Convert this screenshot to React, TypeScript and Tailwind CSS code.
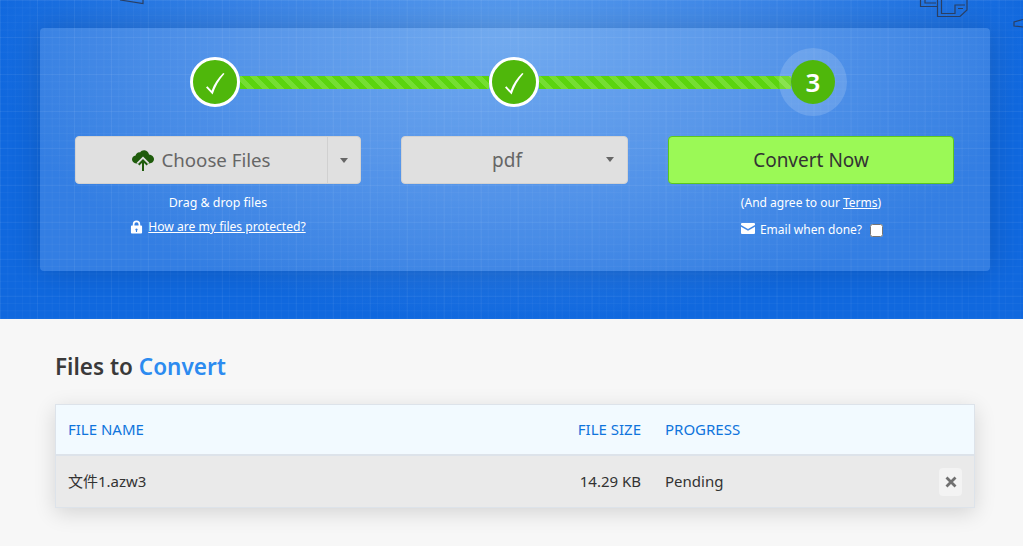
const font = "font-['Noto_Sans','Noto_Sans_CJK_SC',sans-serif]"

function StepDone() {
  return (
    <div className="w-[50px] h-[50px] shrink-0 rounded-full border-[3px] border-white bg-[#4fb70b] relative z-10">
      <svg viewBox="0 0 50 50" className="absolute -left-[3px] -top-[3px] w-[50px] h-[50px]">
        <path d="M16 30.5l1.4-1.3 4.2 4.6C24 27 28 21 33.2 16l1.3.7C29 22.5 25 30 22.6 37.6z" fill="#fff" />
      </svg>
    </div>
  )
}

function StripeBar({ width }: { width: string }) {
  return (
    <div className={`${width} h-[13px] shrink-0 bg-[repeating-linear-gradient(45deg,#5bd40e_0,#5bd40e_5.3px,#75de32_5.3px,#75de32_10.6px)]`} />
  )
}

function CloudIcon() {
  return (
    <svg viewBox="0 0 22 21" className="w-[22px] h-[21px] shrink-0">
      <path fill="#1f5c0c" d="M5 13.500C2 13.500 0 11.800 0 9.500 0 7.400 1.500 5.800 3.600 5.600 4 3.500 6 2 8 2.400 9 .9 10.800 0 12.500.2c2.500.3 4.200 2.100 4.500 4.200 2.800.2 5 2.200 5 4.700 0 2.500-2.100 4.400-4.800 4.400z" />
      <path fill="none" stroke="#e0e0e0" strokeWidth="5" d="M11 21V10M6.500 14.500L11 10l4.500 4.500" />
      <path fill="none" stroke="#1f5c0c" strokeWidth="2" d="M11 21V10.500M6.700 14.800L11 10.500l4.300 4.300" />
    </svg>
  )
}

function Caret() {
  return <span className="w-0 h-0 border-x-[4.5px] border-x-transparent border-t-[5px] border-t-[#666]" />
}

export default function App() {
  return (
    <div className={`${font} min-h-screen bg-[#f7f7f7] overflow-hidden`}>
      {/* Hero */}
      <section className="relative h-[319px] pt-[28px] overflow-hidden bg-[linear-gradient(rgba(255,255,255,0.035)_1px,transparent_1px),linear-gradient(90deg,rgba(255,255,255,0.035)_1px,transparent_1px),linear-gradient(rgba(255,255,255,0.03)_1px,transparent_1px),linear-gradient(90deg,rgba(255,255,255,0.03)_1px,transparent_1px),radial-gradient(ellipse_at_50%_10%,#5a9ced_0%,#3a84e6_36%,#1068de_72%)] bg-size-[37px_37px,37px_37px,7.4px_7.4px,7.4px_7.4px,100%_100%]">
        <svg className="absolute left-0 top-0 w-[1023px] h-[30px]" viewBox="0 0 1023 30" fill="none" stroke="#2a3f63" strokeWidth="1.200">
          <path d="M120 0l23 3.500V0" />
          <path d="M920.500 0v6.500H937.500M925 0v3H936" />
          <path d="M937.500 0V16.500H960L967 10V0M941.500 0V13.500H955V5H965M958 8.500H963" />
          <path d="M1023 19.500L1014 22v4l9 1" />
        </svg>

        <div className="w-[950px] h-[243px] ml-[40px] rounded-[4px] bg-white/15 shadow-[0_0_30px_rgba(0,0,0,0.16)] px-[35px] pt-[29px]">
          {/* Stepper */}
          <div className="flex items-center pl-[115px]">
            <StepDone />
            <StripeBar width="w-[249px]" />
            <StepDone />
            <StripeBar width="w-[252px]" />
            <div className="w-[44px] h-[44px] shrink-0 rounded-full bg-[#4fb70b] shadow-[0_0_0_12px_rgba(255,255,255,0.15)] flex items-center justify-center text-white text-[26px] font-semibold">
              3
            </div>
          </div>

          {/* Actions */}
          <div className="flex gap-10 mt-[29px]">
            <div className="w-[286px]">
              <div className="flex h-[48px] rounded-[4px] bg-[#e0e0e0] border border-[#d2d2d2]">
                <div className="flex-1 flex items-center justify-center gap-[7px] pt-[1px] text-[18.700px] text-[#666]">
                  <CloudIcon />
                  Choose Files
                </div>
                <div className="w-[33px] flex items-center justify-center border-l border-[#d0d0d0]">
                  <Caret />
                </div>
              </div>
              <p className="mt-[10px] text-center text-[12.400px] leading-[18px] text-white">Drag &amp; drop files</p>
              <p className="mt-[6px] flex items-center justify-center gap-[5px] text-[12.100px] leading-[18px] text-white">
                <svg viewBox="0 0 14 15" className="w-[13px] h-[14px]" fill="#fff">
                  <path d="M7 .5a4 4 0 0 0-4 4V6H2a1 1 0 0 0-1 1v6.500a1 1 0 0 0 1 1h10a1 1 0 0 0 1-1V7a1 1 0 0 0-1-1h-1V4.500a4 4 0 0 0-4-4zM4.800 6V4.500a2.200 2.200 0 0 1 4.400 0V6zM7 9a1.300 1.300 0 0 1 .6 2.400V13H6.400v-1.600A1.300 1.300 0 0 1 7 9z" fillRule="evenodd" />
                </svg>
                <a className="underline">How are my files protected?</a>
              </p>
            </div>

            <div className="w-[227px]">
              <div className="relative flex items-center justify-center h-[48px] pt-[1px] pr-[15px] rounded-[4px] bg-[#e0e0e0] border border-[#d2d2d2] text-[19px] text-[#666]">
                pdf
                <span className="absolute right-[13px] top-[20px] flex"><Caret /></span>
              </div>
            </div>

            <div className="w-[286px]">
              <div className="flex items-center justify-center h-[48px] pt-[1px] rounded-[4px] bg-[#9bf956] border border-[#5cc71d] text-[19px] text-[#333]">
                Convert Now
              </div>
              <p className="mt-[10px] text-center text-[12px] leading-[18px] text-white">
                (And agree to our <a className="underline">Terms</a>)
              </p>
              <label className="mt-[9px] pl-[2px] flex items-center justify-center text-[12px] leading-[18px] text-white">
                <svg viewBox="0 0 14 11" className="w-[14px] h-[11px] mr-[5px] -mt-[3px]" fill="#fff">
                  <path d="M1 0h12a1 1 0 0 1 1 1v1L7 6 0 2V1a1 1 0 0 1 1-1z" />
                  <path d="M0 3.800l7 4 7-4V10a1 1 0 0 1-1 1H1a1 1 0 0 1-1-1z" />
                </svg>
                Email when done?
                <input type="checkbox" readOnly className="w-[13px] h-[13px] ml-[8px]" />
              </label>
            </div>
          </div>
        </div>
      </section>

      {/* Files table */}
      <section className="w-[920px] ml-[55px] pt-[32px] pb-[38px]">
        <h2 className="text-[22.500px] leading-[31px] font-semibold text-[#3a3a3a]">
          Files to <span className="text-[#2c8bf0]">Convert</span>
        </h2>
        <div className="mt-[22px] border border-[#dde3ea] shadow-[0_5px_20px_rgba(0,0,0,0.14)]">
          <table className="w-full table-fixed border-collapse text-[15px]">
            <colgroup>
              <col />
              <col className="w-[120px]" />
              <col className="w-[321px]" />
            </colgroup>
            <thead>
              <tr className="h-[50px] bg-[#f2faff] border-b-2 border-[#dde3ea] text-[#0f74dc]">
                <th className="px-3 text-left font-normal">FILE NAME</th>
                <th className="px-3 text-right font-normal">FILE SIZE</th>
                <th className="px-3 text-left font-normal">PROGRESS</th>
              </tr>
            </thead>
            <tbody>
              <tr className="h-[52px] bg-[#eaeaea] text-[#333]">
                <td className="px-3">文件1.azw3</td>
                <td className="px-3 text-right">14.29 KB</td>
                <td className="px-3">
                  <div className="flex items-center justify-between">
                    Pending
                    <span className="w-[23px] h-[28px] rounded-[4px] bg-[#f3f3f3] flex items-center justify-center">
                      <svg viewBox="0 0 12 12" className="w-[12px] h-[12px]" stroke="#707070" strokeWidth="2.800" fill="none">
                        <path d="M1.500 1.500l9 9M10.500 1.500l-9 9" />
                      </svg>
                    </span>
                  </div>
                </td>
              </tr>
            </tbody>
          </table>
        </div>
      </section>
    </div>
  )
}
